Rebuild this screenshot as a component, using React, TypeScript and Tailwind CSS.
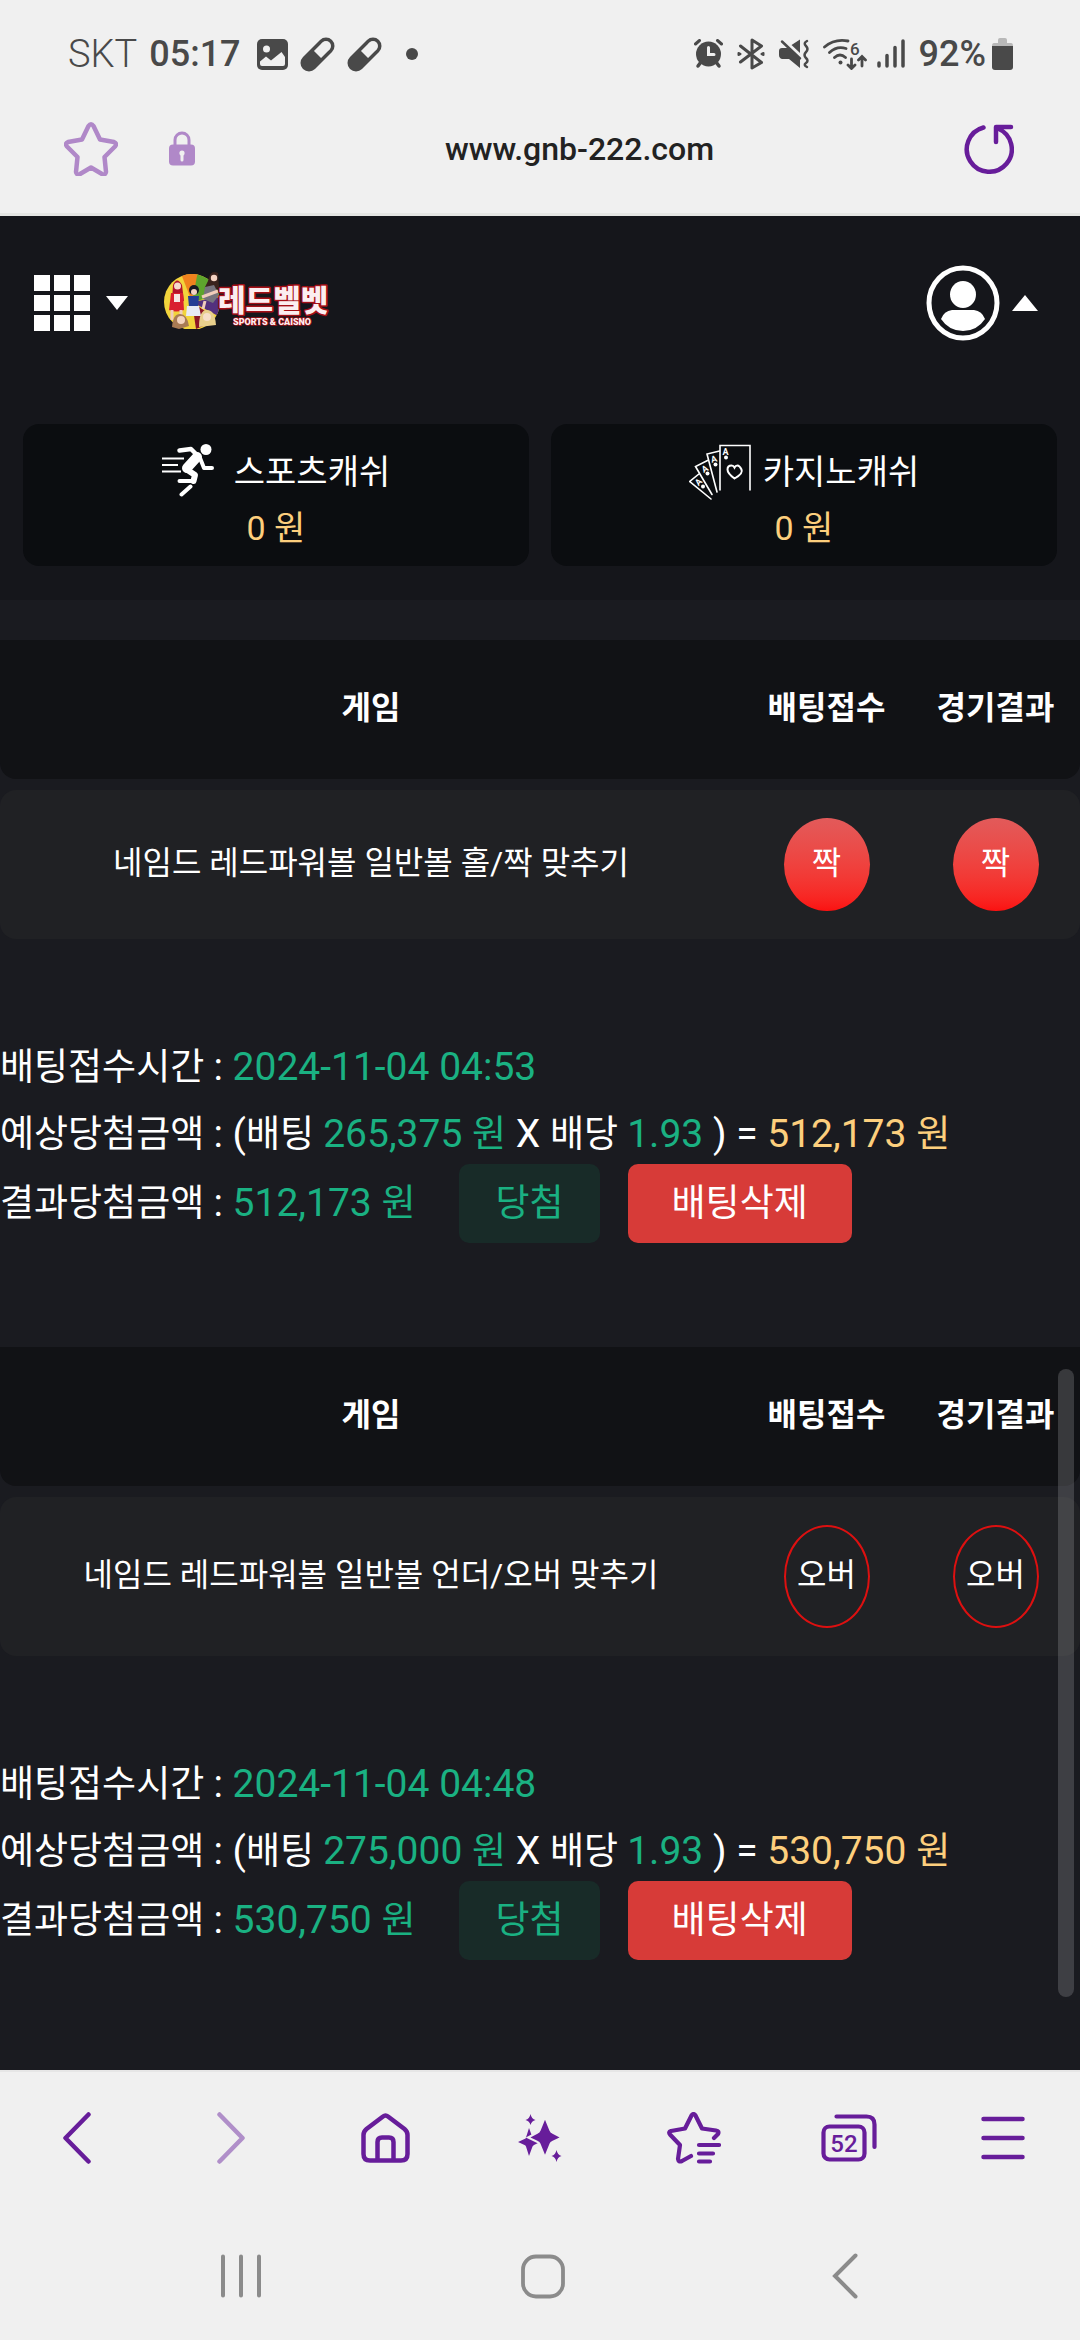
import React, { useState } from 'react';

interface Bet {
  id: number;
  game: string;
  pick: string;
  result: string;
  filled: boolean;
  time: string;
  stake: string;
  odds: string;
  payout: string;
}

const initialBets: Bet[] = [
  {
    id: 1,
    game: '네임드 레드파워볼 일반볼 홀/짝 맞추기',
    pick: '짝',
    result: '짝',
    filled: true,
    time: '2024-11-04 04:53',
    stake: '265,375',
    odds: '1.93',
    payout: '512,173',
  },
  {
    id: 2,
    game: '네임드 레드파워볼 일반볼 언더/오버 맞추기',
    pick: '오버',
    result: '오버',
    filled: false,
    time: '2024-11-04 04:48',
    stake: '275,000',
    odds: '1.93',
    payout: '530,750',
  },
];

function PillIcon() {
  return (
    <svg width="35" height="35" viewBox="0 0 35 35" fill="none" stroke="#494949">
      <path d="M9 26 26 9" strokeWidth="17" strokeLinecap="round" />
      <path d="M26 9h.01" stroke="#f0f0f0" strokeWidth="10" strokeLinecap="round" />
      <path d="M17.500 17.500 26 9" stroke="#f0f0f0" strokeWidth="10" />
    </svg>
  );
}

function StatusBar() {
  return (
    <div className="flex h-[108px] items-center justify-between pr-[67px] pl-[68px] text-[#494949]">
      <div className="flex items-center gap-3">
        <span className="text-[38px] leading-none font-light">SKT</span>
        <span className="text-[36px] leading-none font-medium">05:17</span>
        <svg width="31" height="31" viewBox="0 0 31 31" fill="#494949" className="ml-1">
          <rect width="31" height="31" rx="5" />
          <circle cx="9.500" cy="10" r="3.500" fill="#f0f0f0" />
          <path d="M3 22.500 9 17.500l5 4L24.500 13l3.500 5v7q0 2-2 2H5q-2 0-2-2z" fill="#f0f0f0" />
        </svg>
        <PillIcon />
        <PillIcon />
        <span className="ml-3 size-3 rounded-full bg-[#494949]"></span>
      </div>

      <div className="flex items-center gap-[14px]">
        {/* 알람 */}
        <svg width="29" height="30" viewBox="0 0 29 30" fill="none" stroke="#494949" strokeLinecap="round">
          <circle cx="14.500" cy="15" r="12.500" fill="#494949" stroke="none" />
          <path d="m1.500 5 4-3.500M27.500 5l-4-3.500" strokeWidth="3" />
          <path d="m4 27 3-4M25 27l-3-4" strokeWidth="3.500" />
          <path d="M14.500 8.500v7H20" stroke="#f0f0f0" strokeWidth="3" />
        </svg>
        {/* 블루투스 */}
        <svg width="28" height="32" viewBox="0 0 28 32" fill="none" stroke="#494949" strokeWidth="3" strokeLinecap="round" strokeLinejoin="round">
          <path d="m3.500 8 21 16.500L15 30V2l9.500 6L3.500 24" />
          <path d="m1.500 15v2l2-1zM26.500 15v2l-2-1z" strokeWidth="2" />
        </svg>
        {/* 무음 */}
        <svg width="30" height="30" viewBox="0 0 30 30" fill="#494949">
          <path d="M3 9h6l12 11v9L10 20H3q-3-1-3-4v-4q0-3 3-3zM12.500 6 21 .5V14z" />
          <path d="m3 2.500 18 17M28 2q-4 2-1 5t0 6 0 6 0 5q-3 2 1 4" fill="none" stroke="#494949" strokeWidth="2.500" strokeLinecap="round" />
        </svg>
        {/* 와이파이 */}
        <svg width="44" height="32" viewBox="0 0 44 32" fill="none" stroke="#494949" strokeWidth="2.800" strokeLinecap="round" className="-mr-1">
          <path d="M1.500 9Q11.500.5 25 3M6.500 14.500Q14 7.500 23 10.500M11.500 19.500q5.500-5 11 0" />
          <path d="M17.500 24.500h.01" strokeWidth="4" />
          <path d="M28.500 21v9m-3.500-3 3.500 3.500L32 27M39 28v-9m-3.500 3 3.500-3.500 3.500 3.500" />
          <text x="27" y="17" fontSize="17" fontWeight="500" fill="#494949" stroke="none">6</text>
        </svg>
        <div className="flex items-center gap-[6px]">
          <svg width="28" height="30" viewBox="0 0 28 30" fill="none" stroke="#494949" strokeWidth="3.500" strokeLinecap="round" className="mr-2">
            <path d="M2 24v3M10 16.500V27M18 8.500V27M26 2v25" />
          </svg>
          <span className="text-[36px] leading-none font-medium">92%</span>
          <svg width="21" height="32" viewBox="0 0 21 32">
            <path d="M6 2q0-2 2-2h5q2 0 2 2v3h4q2 0 2 3H0q0-3 2-3h4z" fill="#b8b8b8" />
            <path d="M0 8h21v21q0 3-3 3H3q-3 0-3-3z" fill="#494949" />
          </svg>
        </div>
      </div>
    </div>
  );
}

function AddressBar() {
  return (
    <div className="flex h-[108px] items-center border-b-[3px] border-[#e4e5e3] pr-[66px] pb-6 pl-16">
      <button aria-label="즐겨찾기">
        <svg width="54" height="54" viewBox="0 0 54 54" fill="none" stroke="#b088c8" strokeWidth="4.500" strokeLinejoin="round">
          <path d="M24.500 4q2.500-3.500 5 0l6.500 13.500 14 2.500q3.500 1.500 1 4.500L40.500 35l1.500 15q-.5 3.500-4 2L27 45.500 16 52q-3.500 1.500-4-2l1.500-15L3 24.500Q.5 21.500 4 20l14-2.500z" />
        </svg>
      </button>
      <button aria-label="보안 연결" className="ml-[51px]">
        <svg width="26" height="35" viewBox="0 0 26 35" fill="none">
          <path d="M6 15V9a7 7 0 0 1 14 0v6" stroke="#b088c8" strokeWidth="3" />
          <rect y="13.500" width="26" height="21" rx="4" fill="#b088c8" />
          <path d="M13 22v7" stroke="#f0f0f0" strokeWidth="3" strokeLinecap="round" />
          <circle cx="13" cy="22" r="2.600" fill="#f0f0f0" />
        </svg>
      </button>
      <span className="flex-1 text-center text-[32px] font-medium text-[#222]">www.gnb-222.com</span>
      <button aria-label="새로고침">
        <svg width="50" height="50" viewBox="0 0 50 50" fill="none" stroke="#671d9a" strokeWidth="4.500" strokeLinecap="round" strokeLinejoin="round">
          <path d="M19.500 3.500A22.500 22.500 0 1 0 34 4.500" />
          <path d="M47 3H32v15" />
        </svg>
      </button>
    </div>
  );
}

function Logo() {
  return (
    <svg width="166" height="58" viewBox="0 0 166 58" role="img" aria-label="레드벨벳">
      <defs>
        <clipPath id="disc">
          <circle cx="28" cy="31" r="28" />
        </clipPath>
      </defs>
      <g clipPath="url(#disc)">
        <rect width="56" height="58" fill="#f2d43c" />
        <path d="M28 31 16 0h20z" fill="#f0821e" />
        <path d="M28 31 34 0h22v24z" fill="#5ea52c" />
        <path d="m28 31 28-5v20z" fill="#53307d" />
        <path d="m28 31 26 18-22 9z" fill="#8c1626" />
      </g>
      <path d="M9 14q4-9 9 0l2 16H8z" fill="#b3142c" />
      <circle cx="13.500" cy="15" r="3.500" fill="#f6d9cb" />
      <path d="M7 22h12l1 17q-8 3-15 0z" fill="#d9202f" />
      <path d="M10 23h6v8h-6z" fill="#f6e8e4" />
      <path d="M8 39v10M17 39v9" stroke="#f0cdbb" strokeWidth="3" />
      <path d="M44 10q2-12 10-8l1 14-6 6q-9 1-8-6z" fill="#3a221d" />
      <circle cx="50" cy="7" r="3.200" fill="#f4d2c2" />
      <path d="m41 16 9-2 5 10-6 8-10-4z" fill="#76737d" />
      <path d="m38 26 16-6M41 30l-2 8" stroke="#f0cdbb" strokeWidth="3" />
      <circle cx="30" cy="19" r="5" fill="#191922" />
      <circle cx="30" cy="21" r="3" fill="#f4d2c2" />
      <path d="M24 25h11l-1 11H25z" fill="#253c94" />
      <path d="M23 35h12l2 10H22z" fill="#e8eaf5" />
      <path d="M8 56q1-13 8-13t9 12l-10 3z" fill="#a97b54" />
      <circle cx="17" cy="49" r="4" fill="#f3d3be" />
      <path d="M35 56q0-17 8-17t9 15z" fill="#e8cf8c" />
      <circle cx="43" cy="46" r="4" fill="#f6dfc8" />
      <text x="54" y="40" fontSize="30" fontWeight="900" fill="#fbeef0" stroke="#a30f16" strokeWidth="3" strokeLinejoin="round" paintOrder="stroke">레드벨벳</text>
      <text x="69" y="54" fontSize="9" fontWeight="900" fill="#fbeef0" stroke="#a30f16" strokeWidth="1.500" paintOrder="stroke">SPORTS &amp; CAISNO</text>
    </svg>
  );
}

function SiteHeader() {
  return (
    <header className="flex items-center justify-between pt-[49px] pr-[42px] pl-[34px]">
      <div className="flex items-center">
        <button aria-label="메뉴" className="flex items-center gap-4">
          <span className="grid grid-cols-3 gap-1">
            {Array.from({ length: 9 }, (_, i) => (
              <span key={i} className="size-[16px] bg-white"></span>
            ))}
          </span>
          <svg width="22" height="14" viewBox="0 0 22 14" fill="#fff">
            <path d="M0 0h22L11 14z" />
          </svg>
        </button>
        <a href="#" className="ml-9 pb-1.5">
          <Logo />
        </a>
      </div>
      <button aria-label="내 계정" className="flex items-center gap-3">
        <svg width="74" height="76" viewBox="0 0 74 76" fill="#fff">
          <ellipse cx="37" cy="38" rx="34" ry="35" fill="none" stroke="#fff" strokeWidth="5" />
          <ellipse cx="37" cy="29.500" rx="13" ry="13.500" />
          <path d="M26 45h22q8 1 11 9-8 12-22 12T15 54q3-8 11-9z" />
        </svg>
        <svg width="26" height="16" viewBox="0 0 26 16" fill="#fff">
          <path d="m13 0 13 16H0z" />
        </svg>
      </button>
    </header>
  );
}

function RunnerIcon() {
  return (
    <svg width="52" height="53" viewBox="0 0 52 53" fill="none" stroke="#fff" strokeLinecap="round" strokeLinejoin="round">
      <circle cx="44" cy="5.500" r="5.500" fill="#fff" stroke="none" />
      <path d="M17.500 6.500 29 5l8 8" strokeWidth="4.500" />
      <path d="M35 13 25 24" strokeWidth="10" />
      <path d="m38 14 4 10h8" strokeWidth="4" />
      <path d="m24 25 9 6-1.500 6" strokeWidth="6" />
      <path d="M17.500 37H32M28.500 42.500l-9 8" strokeWidth="4" />
      <path d="M0 14.500h22M0 21h16M0 27.500h19" strokeWidth="2" strokeLinecap="butt" />
    </svg>
  );
}

function CardsIcon() {
  return (
    <svg width="62" height="56" viewBox="0 0 62 56" fill="none" stroke="#fff" strokeWidth="1.600" strokeLinecap="round">
      <path d="M31 46V1.500h30V46" />
      <path d="M30.500 7 18 10l10 38M18.500 16.500l-12 6 16.500 28M10.500 29.500.8 37.500 22 55" />
      <path d="M45.500 34.500q-7-5-7-9t4-4q2 0 3 2 1-2 3-2t4 4-7 9z" strokeWidth="2" />
      <g fill="#fff" stroke="none" fontSize="9" fontWeight="700" textAnchor="middle">
        <text x="36.500" y="11">A</text>
        <text x="25" y="18" transform="rotate(-15 25 15)">A</text>
        <text x="16" y="28" transform="rotate(-30 16 25)">A</text>
        <text x="9.500" y="41" transform="rotate(-45 9.500 38)">A</text>
        <circle cx="37" cy="13.500" r="2" />
        <circle cx="26.500" cy="20.500" r="2" />
        <circle cx="18.500" cy="29.500" r="2" />
        <circle cx="14" cy="42.500" r="2" />
      </g>
    </svg>
  );
}

function CashCard({ icon, title, amount }: { icon: React.ReactNode; title: string; amount: string }) {
  return (
    <div className="flex-1 rounded-2xl bg-[#0b0d10] pt-5 pb-2.5 text-center text-[34px] leading-[56px]">
      <div className="flex items-start justify-center">
        {icon}
        <span className="text-white">{title}</span>
      </div>
      <div className="text-[#fdcf7d]">{amount} 원</div>
    </div>
  );
}

function Mark({ label, filled }: { label: string; filled: boolean }) {
  return (
    <span
      className={
        filled
          ? 'mx-auto flex h-[93px] w-[86px] items-center justify-center rounded-[50%] bg-linear-to-b from-[#e25a5a] to-[#fb1010] pb-1'
          : 'mx-auto flex h-[103px] w-[86px] items-center justify-center rounded-[50%] border-2 border-[#dd1010] pb-1'
      }
    >
      {label}
    </span>
  );
}

// 숫자와 영문은 한글보다 조금 크게
function Num({ children }: { children: React.ReactNode }) {
  return <span className="text-[39px]">{children}</span>;
}

function BetItem({ bet, onDelete }: { bet: Bet; onDelete: (id: number) => void }) {
  return (
    <section className="pb-[93px] text-white">
      <table className="w-full border-separate border-spacing-x-0 border-spacing-y-[11px] text-center text-[32px] leading-[48px]">
        <thead>
          <tr>
            <th className="rounded-bl-2xl bg-[#111215] pt-11 pb-[47px]">게임</th>
            <th className="w-[169px] bg-[#111215] pt-11 pb-[47px]">배팅접수</th>
            <th className="w-[169px] rounded-br-2xl bg-[#111215] pt-11 pb-[47px]">경기결과</th>
          </tr>
        </thead>
        <tbody>
          <tr>
            <td className="rounded-l-2xl bg-[#202124] pb-1">{bet.game}</td>
            <td className="bg-[#202124] py-7">
              <Mark label={bet.pick} filled={bet.filled} />
            </td>
            <td className="rounded-r-2xl bg-[#202124] py-7">
              <Mark label={bet.result} filled={bet.filled} />
            </td>
          </tr>
        </tbody>
      </table>

      <div className="mt-[84px] text-[37px] leading-[67px]">
        <p>
          배팅접수시간 <Num>: <span className="text-[#1ab182]">{bet.time}</span></Num>
        </p>
        <p>
          예상당첨금액 <Num>: (</Num>배팅{' '}
          <span className="text-[#1ab182]"><Num>{bet.stake} </Num>원</span>
          <Num> X </Num>배당{' '}
          <Num><span className="text-[#1ab182]">{bet.odds}</span> ) = </Num>
          <span className="text-[#fdcf7d]"><Num>{bet.payout} </Num>원</span>
        </p>
        <div className="-mt-1 flex items-center">
          <p>
            결과당첨금액 <Num>: </Num>
            <span className="text-[#1ab182]"><Num>{bet.payout} </Num>원</span>
          </p>
          <span className="ml-11 rounded-[10px] bg-[#182b28] px-9 py-1.5 text-[#1ab182]">당첨</span>
          <button onClick={() => onDelete(bet.id)} className="ml-7 rounded-[10px] bg-[#d73b38] px-11 py-1.5">
            배팅삭제
          </button>
        </div>
      </div>
    </section>
  );
}

function BrowserToolbar() {
  return (
    <nav className="grid h-[138px] grid-cols-7 place-items-center border-t-2 border-[#e6e6e6] pb-1">
      <button aria-label="뒤로">
        <svg width="28" height="52" viewBox="0 0 28 52" fill="none" stroke="#671d9a" strokeWidth="4.500" strokeLinecap="round" strokeLinejoin="round">
          <path d="M25.500 2.500 2.500 26l23 23.500" />
        </svg>
      </button>
      <button aria-label="앞으로" disabled>
        <svg width="28" height="52" viewBox="0 0 28 52" fill="none" stroke="#b08fc9" strokeWidth="4.500" strokeLinecap="round" strokeLinejoin="round">
          <path d="m2.500 2.500 23 23.500-23 23.500" />
        </svg>
      </button>
      <button aria-label="홈페이지">
        <svg width="49" height="50" viewBox="0 0 49 50" fill="none" stroke="#671d9a" strokeWidth="4.500">
          <path d="M22 3.500q2.500-2 5 0L43.500 16q3 2.500 3 6v19q0 6.500-6.500 6.500H9q-6.500 0-6.500-6.500V22q0-3.500 3-6z" />
          <path d="M16.500 47V29q0-4.500 4.500-4.500h7q4.500 0 4.500 4.500v18" />
        </svg>
      </button>
      <button aria-label="AI 도우미">
        <svg width="44" height="49" viewBox="0 0 44 49" fill="#671d9a">
          <path d="m11 14 3.500 9.500q.5 1 1.500 1.500l6 3-6 3q-1 .5-1.500 1.500L11 42l-3-9.500Q7.500 31 6.500 31L0 28l6.500-3q1 0 1.500-1.500zM12.500 0q1 5 5 6-4 1-5 5-1-4-5-5 4-1 5-6zM38.500 36q1 5 5 6-4 1-5 6-1-5-5-6 4-1 5-6z" />
          <path d="m27 3 5.500 13.500q.5 1.500 2 2L44 23.500l-9.500 4.500q-1.500.5-2 2L27 43.500 21.500 30q-.5-1.500-2-2L10 23.500l9.500-5q1.500-.5 2-2z" stroke="#f0f0f0" strokeWidth="2" />
        </svg>
      </button>
      <button aria-label="북마크">
        <svg width="54" height="52" viewBox="0 0 54 52" fill="none" stroke="#671d9a" strokeWidth="4.200" strokeLinecap="round" strokeLinejoin="round">
          <path d="m47 26 4-4q1.500-3-2-3.500l-14-2-6.500-13q-2-3-4 0l-6.500 13-14 2.500q-3 1-1 3.500l10 10.500-2 14q.5 3.500 4 2l9-5" />
          <path d="M32 33h20M32 41.500h14M32 49.500h11" />
        </svg>
      </button>
      <button aria-label="탭 52개">
        <svg width="56" height="48" viewBox="0 0 56 48" fill="none" stroke="#671d9a" strokeWidth="4.200" strokeLinecap="round">
          <rect x="2.500" y="12.500" width="41" height="33" rx="6" />
          <path d="M15.500 2.500h30q8 0 8 8V33" />
          <text x="23" y="37.500" fontSize="24" fontWeight="500" textAnchor="middle" fill="#671d9a" stroke="none">52</text>
        </svg>
      </button>
      <button aria-label="더보기">
        <svg width="44" height="44" viewBox="0 0 44 44" fill="none" stroke="#671d9a" strokeWidth="4.500" strokeLinecap="round">
          <path d="M2.500 3h39M2.500 22h39M2.500 41h39" />
        </svg>
      </button>
    </nav>
  );
}

function SystemNav() {
  return (
    <nav className="grid grid-cols-3 place-items-center pt-[45px] pr-[84px] pb-[41px] pl-[90px]">
      <button aria-label="최근 앱">
        <svg width="40" height="44" viewBox="0 0 40 44" stroke="#8b8b8b" strokeWidth="4" strokeLinecap="round">
          <path d="M2 2.500v39M20 2.500v39M38 2.500v39" />
        </svg>
      </button>
      <button aria-label="홈">
        <svg width="44" height="45" viewBox="0 0 44 45" fill="none" stroke="#8b8b8b" strokeWidth="3.800">
          <rect x="2" y="2.500" width="40" height="40" rx="13" />
        </svg>
      </button>
      <button aria-label="이전">
        <svg width="26" height="46" viewBox="0 0 26 46" fill="none" stroke="#8b8b8b" strokeWidth="4" strokeLinecap="round">
          <path d="M23.500 2.500 3 23l20.500 20.500" />
        </svg>
      </button>
    </nav>
  );
}

export default function App() {
  const [bets, setBets] = useState<Bet[]>(initialBets);

  const handleDelete = (id: number) => {
    setBets(bets.filter((b) => b.id !== id));
  };

  return (
    <div className="flex min-h-screen flex-col bg-[#f0f0f0] font-['Roboto','Noto_Sans_CJK_KR',sans-serif]">
      <StatusBar />
      <AddressBar />

      <main className="relative flex-1 bg-[#1a1b20]">
        <div className="bg-[#15161b] pb-[34px]">
          <SiteHeader />
          <div className="flex gap-[22px] px-[23px] pt-[83px]">
            <CashCard icon={<span className="mr-5"><RunnerIcon /></span>} title="스포츠캐쉬" amount="0" />
            <CashCard icon={<span className="mr-3"><CardsIcon /></span>} title="카지노캐쉬" amount="0" />
          </div>
        </div>

        <div className="pt-[29px]">
          {bets.map((bet) => (
            <BetItem key={bet.id} bet={bet} onDelete={handleDelete} />
          ))}
        </div>

        {/* 스크롤바 */}
        <div className="absolute top-[1153px] right-1.5 bottom-[73px] w-4 rounded-full bg-[#a1a4a8]/27"></div>
      </main>

      <BrowserToolbar />
      <SystemNav />
    </div>
  );
}
